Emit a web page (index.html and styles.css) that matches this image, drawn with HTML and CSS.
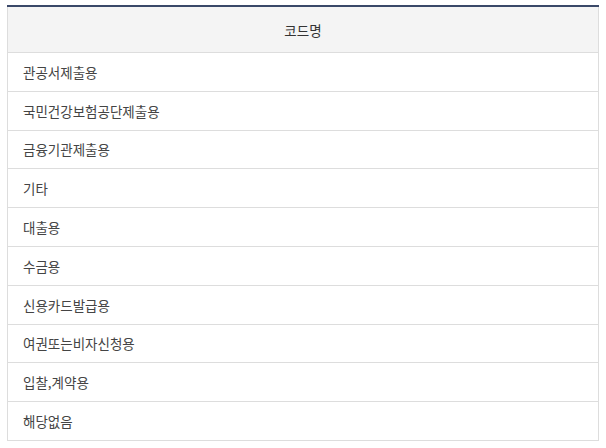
FILE: index.html
```html
<!DOCTYPE html>
<html lang="ko">
<head>
<meta charset="utf-8">
<link rel="stylesheet" href="styles.css">
</head>
<body>
<div class="wrap">
<table class="code-table">
<thead>
<tr><th>코드명</th></tr>
</thead>
<tbody>
<tr><td>관공서제출용</td></tr>
<tr><td>국민건강보험공단제출용</td></tr>
<tr><td>금융기관제출용</td></tr>
<tr><td>기타</td></tr>
<tr><td>대출용</td></tr>
<tr><td>수금용</td></tr>
<tr><td>신용카드발급용</td></tr>
<tr><td>여권또는비자신청용</td></tr>
<tr><td>입찰,계약용</td></tr>
<tr><td>해당없음</td></tr>
</tbody>
</table>
</div>
</body>
</html>
```
FILE: styles.css
```css
html, body {
  margin: 0;
  padding: 0;
  background: #ffffff;
}
.wrap {
  padding: 5px 7px 0 7px;
}
.code-table {
  width: 592px;
  border-collapse: collapse;
  font-family: "Noto Sans CJK KR", "Noto Sans", sans-serif;
  font-size: 13.5px;
  color: #444;
}
.code-table th {
  background: #f4f4f4;
  height: 45px;
  padding: 0;
  font-weight: normal;
  color: #333;
  text-align: center;
  border: 1px solid #dddddd;
  border-top: 2px solid #3a4868;
}
.code-table td {
  height: 37.8px;
  padding: 0 0 0 15px;
  text-align: left;
  border: 1px solid #dddddd;
}
```
